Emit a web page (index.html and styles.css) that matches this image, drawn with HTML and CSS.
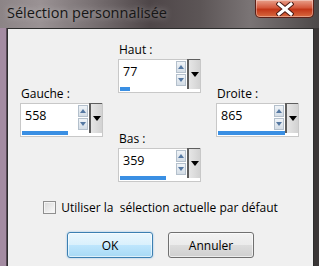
FILE: index.html
```html
<!DOCTYPE html>
<html>
<head>
    <title>Sélection personnalisée</title>
    <link rel="stylesheet" href="styles.css">
</head>
<body>
    <div class="window">
        <div class="titlebar">
            <span class="title">Sélection personnalisée</span>
            <button class="close-button">
                <svg width="18" height="14" viewBox="0 0 18 14">
                    <path d="M3 2 L15 12 M15 2 L3 12" stroke="#4a1a14" stroke-width="5" stroke-linecap="square"/>
                    <path d="M3 2 L15 12 M15 2 L3 12" stroke="#ffffff" stroke-width="3" stroke-linecap="square"/>
                </svg>
            </button>
        </div>
        <div class="frame">
            <div class="client">
                <div class="fields">
                    <div class="column side">
                        <div class="field">
                            <label>Gauche :</label>
                            <div class="spin">
                                <div class="spin-main">
                                    <div class="spin-row">
                                        <span class="spin-value">558</span>
                                        <div class="spin-arrows"><span class="arrow-up"></span><span class="arrow-down"></span></div>
                                    </div>
                                    <div class="spin-bar"><div class="spin-fill" style="width: 68%"></div></div>
                                </div>
                                <div class="spin-drop"></div>
                            </div>
                        </div>
                    </div>

                    <div class="column middle">
                        <div class="field">
                            <label>Haut :</label>
                            <div class="spin">
                                <div class="spin-main">
                                    <div class="spin-row">
                                        <span class="spin-value">77</span>
                                        <div class="spin-arrows"><span class="arrow-up"></span><span class="arrow-down"></span></div>
                                    </div>
                                    <div class="spin-bar"><div class="spin-fill" style="width: 15%"></div></div>
                                </div>
                                <div class="spin-drop"></div>
                            </div>
                        </div>

                        <div class="field bottom">
                            <label>Bas :</label>
                            <div class="spin">
                                <div class="spin-main">
                                    <div class="spin-row">
                                        <span class="spin-value">359</span>
                                        <div class="spin-arrows"><span class="arrow-up"></span><span class="arrow-down"></span></div>
                                    </div>
                                    <div class="spin-bar"><div class="spin-fill" style="width: 68%"></div></div>
                                </div>
                                <div class="spin-drop"></div>
                            </div>
                        </div>
                    </div>

                    <div class="column side">
                        <div class="field">
                            <label>Droite :</label>
                            <div class="spin">
                                <div class="spin-main">
                                    <div class="spin-row">
                                        <span class="spin-value">865</span>
                                        <div class="spin-arrows"><span class="arrow-up"></span><span class="arrow-down"></span></div>
                                    </div>
                                    <div class="spin-bar"><div class="spin-fill" style="width: 100%"></div></div>
                                </div>
                                <div class="spin-drop"></div>
                            </div>
                        </div>
                    </div>
                </div>

                <div class="check-row">
                    <span class="checkbox"></span>
                    <span>Utiliser la&nbsp; sélection actuelle par défaut</span>
                </div>

                <div class="button-container">
                    <button class="ok-button">OK</button>
                    <button class="cancel-button">Annuler</button>
                </div>
            </div>
        </div>
    </div>
</body>
</html>
```

FILE: styles.css
```css
body {
    margin: 0;
    font-family: "Open Sans", sans-serif;
    font-size: 12px;
    color: #000;
    background: #6e6a6c;
    overflow: hidden;
}

.window {
    width: 319px;
    height: 266px;
    display: flex;
    flex-direction: column;
}

.titlebar {
    height: 28px;
    flex: none;
    display: flex;
    justify-content: space-between;
    align-items: flex-start;
    background: linear-gradient(to right, #8c8486 0, #9a9294 40px, #7a7274 90px, #4e4648 150px, #5c5556 200px, #7a7475 250px, #4c4848 319px);
}

.title {
    margin: 3px 0 0 7px;
    font-size: 14.5px;
    color: #161616;
    text-shadow: 0 0 6px rgba(255, 255, 255, 0.5);
}

.close-button {
    width: 59px;
    height: 18px;
    margin-right: 5px;
    padding: 0;
    border: 1px solid #5a2018;
    border-top: none;
    border-radius: 0 0 5px 5px;
    background: linear-gradient(#e8a08c, #d4583c 45%, #c23618 55%, #d86a40);
    box-shadow: inset 0 0 0 1px rgba(255, 255, 255, 0.35);
    display: flex;
    align-items: center;
    justify-content: center;
}

.frame {
    flex: 1;
    display: flex;
    padding: 0 5px 0 7px;
    background: linear-gradient(to right, #a48ca2 0, #a48ca2 6px, #5a4a58 6px, #5a4a58 7px, #6e6a6c 7px, #6e6a6c 313px, #d8d8d8 313px, #d8d8d8 314px, #3a3636 314px);
}

.client {
    flex: 1;
    background-color: #f0f0f0;
    border: 1px solid #2d2d2d;
    border-bottom: none;
}

.fields {
    display: flex;
    gap: 15px;
    padding-left: 12px;
}

.side {
    margin-top: 57px;
}

.middle {
    padding-top: 13px;
}

.field label {
    display: block;
    line-height: 15px;
    margin-bottom: 2px;
    padding-left: 1px;
}

.field.bottom {
    margin-top: 38px;
}

.spin {
    width: 83px;
    height: 34px;
    box-sizing: border-box;
    display: flex;
    border: 1px solid #c8c8c8;
    background: #fff;
}

.spin-main {
    flex: 1;
    display: flex;
    flex-direction: column;
}

.spin-row {
    flex: 1;
    display: flex;
}

.spin-value {
    flex: 1;
    padding: 3px 0 0 4px;
    font-size: 12.5px;
}

.spin-arrows {
    width: 10px;
    display: flex;
    flex-direction: column;
    gap: 1px;
    padding-top: 1px;
    margin-right: 1px;
}

.arrow-up,
.arrow-down {
    height: 12px;
    box-sizing: border-box;
    border: 1px solid #b4c0cc;
    background: linear-gradient(#f0f4f8, #d4dde6);
    display: flex;
    align-items: center;
    justify-content: center;
}

.arrow-up::after {
    content: "";
    border-left: 3px solid transparent;
    border-right: 3px solid transparent;
    border-bottom: 4px solid #5578a2;
}

.arrow-down::after {
    content: "";
    border-left: 3px solid transparent;
    border-right: 3px solid transparent;
    border-top: 4px solid #5578a2;
}

.spin-bar {
    height: 4px;
    margin: 0 0 1px 1px;
}

.spin-fill {
    height: 100%;
    background-color: #3a8fe3;
}

.spin-drop {
    width: 11px;
    height: 29px;
    border-left: 2px solid #5e5e5e;
    border-top: 1px solid #5e5e5e;
    margin-top: -1px;
    background: linear-gradient(to right, #e6e6e6, #d2d2d2);
    display: flex;
    align-items: center;
    justify-content: center;
}

.spin-drop::after {
    content: "";
    border-left: 4px solid transparent;
    border-right: 4px solid transparent;
    border-top: 5px solid #000;
}

.check-row {
    margin-top: 17px;
    display: flex;
    justify-content: center;
    align-items: center;
    gap: 5px;
}

.checkbox {
    width: 13px;
    height: 13px;
    box-sizing: border-box;
    border: 1px solid #8f8f8f;
    background: linear-gradient(135deg, #d8d8d8, #fbfbfb);
    box-shadow: inset 0 0 0 1px #f4f4f4;
}

.button-container {
    margin-top: 16px;
    display: flex;
    justify-content: center;
    gap: 15px;
}

.ok-button,
.cancel-button {
    width: 86px;
    height: 26px;
    border-radius: 3px;
    font-family: "Open Sans", sans-serif;
    font-size: 12px;
    color: #000;
    padding: 0;
}

.ok-button {
    border: 1px solid #3c7fb1;
    background: linear-gradient(#eaf6fd 0, #d9f0fc 50%, #bee6fd 50%, #a7d9f5 100%);
    box-shadow: inset 0 0 0 1px rgba(255, 255, 255, 0.6), 0 0 2px rgba(60, 150, 220, 0.6);
}

.cancel-button {
    border: 1px solid #707070;
    background: linear-gradient(#f2f2f2 0, #ebebeb 50%, #dddddd 50%, #cfcfcf 100%);
    box-shadow: inset 0 0 0 1px rgba(255, 255, 255, 0.6);
}
```
